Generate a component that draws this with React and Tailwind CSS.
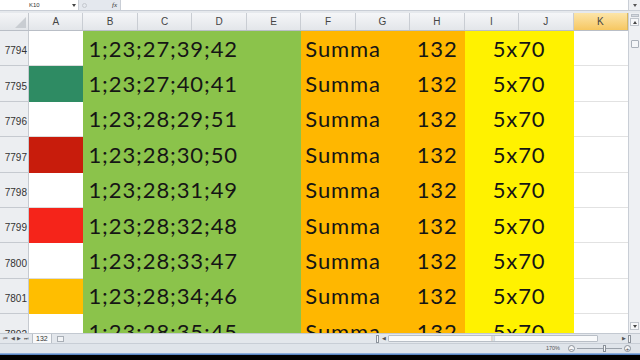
import React from "react";

const rows = [
  { n: "7794", a: "bg-white", t: "1;23;27;39;42" },
  { n: "7795", a: "bg-[#2e8b63]", t: "1;23;27;40;41" },
  { n: "7796", a: "bg-white", t: "1;23;28;29;51" },
  { n: "7797", a: "bg-[#c81c0c]", t: "1;23;28;30;50" },
  { n: "7798", a: "bg-white", t: "1;23;28;31;49" },
  { n: "7799", a: "bg-[#f5241a]", t: "1;23;28;32;48" },
  { n: "7800", a: "bg-white", t: "1;23;28;33;47" },
  { n: "7801", a: "bg-[#ffbe00]", t: "1;23;28;34;46" },
  { n: "7802", a: "bg-white", t: "1;23;28;35;45" },
];

const cols = ["A", "B", "C", "D", "E", "F", "G", "H", "I", "J", "K"];

const big = "font-['Lato',sans-serif] text-[22px] tracking-[0.9px] text-[#151515] leading-none";

export default function App() {
  return (
    <div className="w-[640px] h-[360px] overflow-hidden bg-black flex flex-col font-['Liberation_Sans',sans-serif]">
      {/* formula bar */}
      <div className="h-[11px] flex bg-white border-b border-[#c9ced6] shrink-0">
        <div className="w-[78px] flex items-center relative">
          <span className="ml-[29px] text-[6px] text-[#333] leading-none">K10</span>
          <span className="absolute left-[72px] top-[4px] w-0 h-0 border-l-[2px] border-r-[2px] border-t-[3px] border-l-transparent border-r-transparent border-t-[#444]" />
        </div>
        <div className="w-[43px] bg-[#e4e8ee] flex items-center justify-between px-[3px] border-x border-[#c9ced6]">
          <span className="w-[5px] h-[5px] rounded-full border border-[#c4c8ce]" />
          <span className="italic text-[7px] text-[#333] leading-none font-['Liberation_Serif',serif]">fx</span>
        </div>
        <div className="flex-1 bg-white" />
        <div className="w-[12px] bg-[#eef0f3] flex items-center justify-center border-l border-[#c9ced6]">
          <span className="w-0 h-0 border-l-[2px] border-r-[2px] border-t-[3px] border-l-transparent border-r-transparent border-t-[#555]" />
        </div>
      </div>
      <div className="h-[2px] bg-[#e6e9ed] shrink-0" />

      {/* sheet area */}
      <div className="flex h-[320px] shrink-0">
        <div className="w-[628px] flex flex-col bg-white overflow-hidden">
          {/* column headers */}
          <div className="h-[18px] grid grid-cols-[29px_repeat(11,1fr)] shrink-0 border-b border-[#b9bec6]">
            <div className="bg-gradient-to-b from-[#f4f5f7] to-[#e2e5e9] border-r border-[#c4c8ce] relative overflow-hidden">
              <span className="absolute right-[2px] bottom-[2px] w-0 h-0 border-b-[11px] border-l-[11px] border-b-[#c9cdd2] border-l-transparent" />
            </div>
            {cols.map((c) =>
              c === "K" ? (
                <div key={c} className="bg-gradient-to-b from-[#fce5a8] to-[#f6c760] border-r border-[#d9b860] flex items-center justify-center text-[10px] text-[#444]">
                  {c}
                </div>
              ) : (
                <div key={c} className="bg-gradient-to-b from-[#f5f6f8] to-[#e3e6ea] border-r border-[#c9cdd3] flex items-center justify-center text-[10px] text-[#444]">
                  {c}
                </div>
              )
            )}
          </div>
          {/* rows */}
          <div className="flex-1 overflow-hidden">
            {rows.map((r) => (
              <div key={r.n} className="h-[35.4px] grid grid-cols-[29px_repeat(11,1fr)]">
                <div className="bg-[#eceef1] border-r border-b border-[#c6cad0] flex items-end justify-end pb-[9px] pr-[1px] text-[10px] leading-none text-[#333]">
                  {r.n}
                </div>
                <div className={`${r.a} border-b ${r.a === "bg-white" ? "border-[#dcdcdc]" : "border-transparent"}`} />
                <div className={`col-span-4 bg-[#8bc34b] flex items-center pl-[5px] ${big}`}>{r.t}</div>
                <div className={`col-span-3 bg-[#ffb700] flex items-center justify-between pl-[4px] pr-[7px] ${big}`}>
                  <span>Summa</span>
                  <span>132</span>
                </div>
                <div className={`col-span-2 bg-[#fff200] flex items-center justify-center ${big}`}>5x70</div>
                <div className="bg-white border-b border-[#e2e2e2]" />
              </div>
            ))}
          </div>
        </div>
        {/* vertical scrollbar */}
        <div className="w-[12px] bg-[#eef0f3] border-l border-[#c9ced6] flex flex-col items-center">
          <div className="w-[8px] h-[3px] mt-[1px] bg-[#d6dae0] border border-[#b8bec6]" />
          <div className="w-[9px] h-[8px] mt-[1px] flex items-center justify-center bg-[#f6f7f9] border border-[#c0c5cc]">
            <span className="w-0 h-0 border-l-[2px] border-r-[2px] border-b-[3px] border-l-transparent border-r-transparent border-b-[#444]" />
          </div>
          <div className="w-[8px] h-[8px] mt-[14px] bg-[#f4f6f8] border border-[#a9b0b9] rounded-[1px]" />
          <div className="flex-1" />
          <div className="w-[9px] h-[8px] mb-[3px] flex items-center justify-center bg-[#f6f7f9] border border-[#c0c5cc]">
            <span className="w-0 h-0 border-l-[2px] border-r-[2px] border-t-[3px] border-l-transparent border-r-transparent border-t-[#444]" />
          </div>
        </div>
      </div>

      {/* tab bar */}
      <div className="h-[10px] bg-[#e3e7ec] flex items-center shrink-0 border-t border-[#c3c9d1]">
        <div className="w-[32px] flex items-center justify-around px-[2px] text-[5px] text-[#555] leading-none">
          <span>⏮</span><span>◀</span><span>▶</span><span>⏭</span>
        </div>
        <div className="h-[9px] px-[3px] bg-[#f8f9fa] border-x border-[#b9bfc7] text-[7px] text-[#333] leading-[9px]">132</div>
        <div className="ml-[5px] w-[7px] h-[6px] border border-[#a8aeb6] bg-[#f2f4f6]" />
        <div className="flex-1" />
        <div className="w-[3px] h-[8px] border border-[#8c939c] bg-[#f6f7f8]" />
        <div className="ml-[3px] text-[5px] text-[#555]">◀</div>
        <div className="w-[210px] h-[7px] mx-[2px] bg-[#f9fafb] border border-[#b8bec6] rounded-[1px] flex items-center justify-center">
          <span className="text-[5px] text-[#999] leading-none">|||</span>
        </div>
        <div className="w-[22px]" />
        <div className="text-[5px] text-[#555]">▶</div>
        <div className="ml-[2px] w-[3px] h-[8px] border border-[#8c939c] bg-[#f6f7f8] mr-[9px]" />
      </div>
      {/* status bar */}
      <div className="h-[10px] bg-[#dfe4ea] flex items-center justify-end shrink-0 border-t border-[#c8ced6]">
        <span className="text-[5.5px] text-[#555] leading-none mr-[8px]">170%</span>
        <span className="w-[7px] h-[7px] rounded-full border border-[#8a919a] bg-[#f4f5f7] flex items-center justify-center text-[6px] leading-none text-[#444]">−</span>
        <div className="w-[45px] h-[1px] bg-[#9aa1aa] mx-[2px] relative">
          <span className="absolute left-[26px] top-[-3px] w-[3px] h-[7px] bg-[#f7f8f9] border border-[#8a919a]" />
        </div>
        <span className="w-[7px] h-[7px] rounded-full border border-[#8a919a] bg-[#f4f5f7] flex items-center justify-center text-[6px] leading-none text-[#444] mr-[9px]">+</span>
      </div>
      <div className="h-[2px] bg-gradient-to-b from-[#a9c4e6] to-[#3f6fb5] shrink-0" />
      <div className="flex-1 bg-black" />
    </div>
  );
}
